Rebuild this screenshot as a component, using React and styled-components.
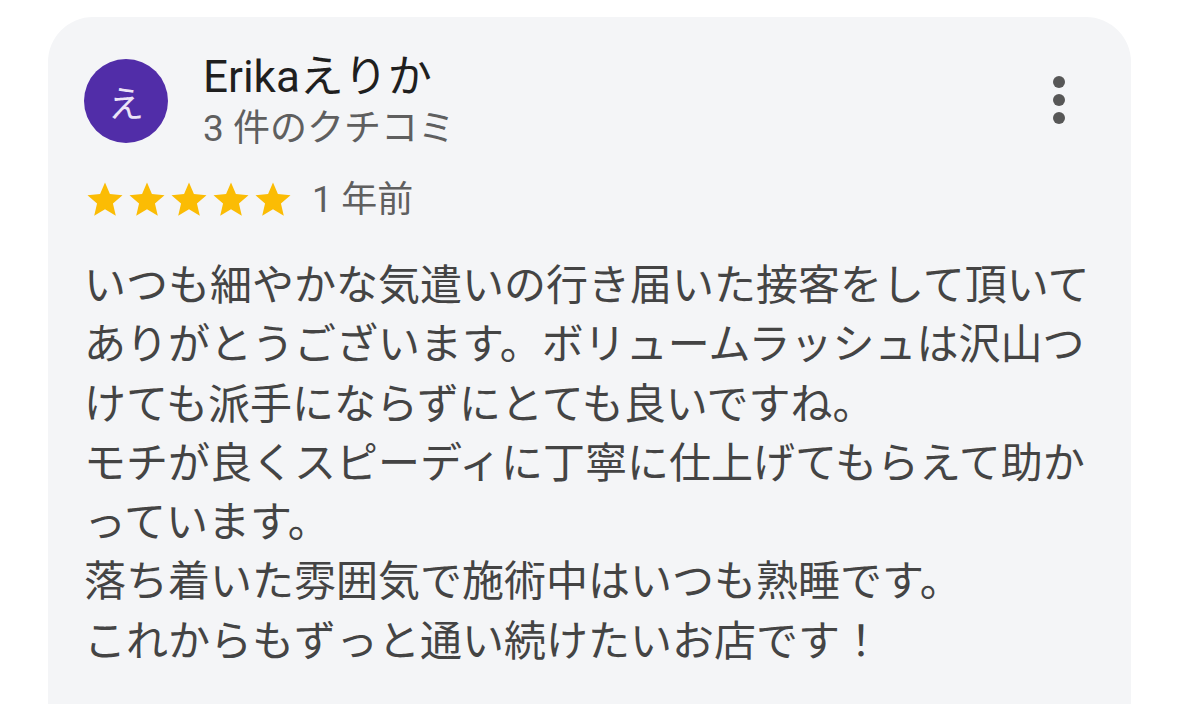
import styled, { createGlobalStyle } from "styled-components";

const GlobalStyle = createGlobalStyle`
  html, body {
    margin: 0;
    padding: 0;
    background: #ffffff;
    overflow: hidden;
  }
  body {
    font-family: "Roboto", "Noto Sans CJK JP", sans-serif;
  }
`;

const review = {
  initial: "え",
  name: "Erikaえりか",
  count: "3 件のクチコミ",
  rating: 5,
  time: "1 年前",
  text:
    "いつも細やかな気遣いの行き届いた接客をして頂いてありがとうございます。ボリュームラッシュは沢山つけても派手にならずにとても良いですね。\n" +
    "モチが良くスピーディに丁寧に仕上げてもらえて助かっています。\n" +
    "落ち着いた雰囲気で施術中はいつも熟睡です。\n" +
    "これからもずっと通い続けたいお店です！",
};

const Star = () => (
  <svg width="42" height="42" viewBox="0 0 24 24">
    <path
      fill="#fbbc04"
      d="M12 17.27L18.18 21l-1.64-7.03L22 9.24l-7.19-.61L12 2 9.19 8.63 2 9.24l5.46 4.73L5.82 21z"
    />
  </svg>
);

const MoreIcon = () => (
  <svg width="72" height="72" viewBox="0 0 24 24" fill="#575757">
    <circle cx="12" cy="6" r="2" />
    <circle cx="12" cy="12" r="2" />
    <circle cx="12" cy="18" r="2" />
  </svg>
);

const App = () => {
  return (
    <>
      <GlobalStyle />
      <Page>
        <Card>
          <Header>
            <Avatar>{review.initial}</Avatar>
            <Author>
              <Name>{review.name}</Name>
              <Count>{review.count}</Count>
            </Author>
            <MenuButton aria-label="その他">
              <MoreIcon />
            </MenuButton>
          </Header>
          <RatingRow>
            <Stars>
              {Array.from({ length: review.rating }).map((_, i) => (
                <Star key={i} />
              ))}
            </Stars>
            <Time>{review.time}</Time>
          </RatingRow>
          <Body>{review.text}</Body>
        </Card>
      </Page>
    </>
  );
};

const Page = styled.div`
  padding: 17px 48px 0 48px;
  height: 704px;
  box-sizing: border-box;
`;

const Card = styled.div`
  background: #f4f5f7;
  border-radius: 45px;
  padding: 42px 36px 80px 36px;
`;

const Header = styled.div`
  display: flex;
  align-items: flex-start;
`;

const Avatar = styled.div`
  width: 84px;
  height: 84px;
  border-radius: 50%;
  background: #512da8;
  color: #ece4f7;
  font-family: "Noto Sans CJK JP", sans-serif;
  font-size: 36px;
  display: flex;
  align-items: center;
  justify-content: center;
  flex-shrink: 0;
`;

const Author = styled.div`
  display: flex;
  flex-direction: column;
  margin-left: 35px;
  margin-top: -4px;
  flex: 1;
`;

const Name = styled.div`
  font-size: 44px;
  line-height: 44px;
  color: #1f1f1f;
`;

const Count = styled.div`
  font-size: 37px;
  line-height: 44px;
  margin-top: 8px;
  color: #5f5f5f;
`;

const MenuButton = styled.button`
  border: none;
  background: none;
  padding: 0;
  margin-top: 5px;
  width: 72px;
  height: 72px;
  display: flex;
`;

const RatingRow = styled.div`
  display: flex;
  align-items: center;
  margin-top: 28px;
`;

const Stars = styled.div`
  display: flex;
  svg {
    display: block;
  }
`;

const Time = styled.span`
  font-size: 36px;
  line-height: 42px;
  color: #5f5f5f;
  margin-left: 18px;
`;

const Body = styled.p`
  margin: 35px 0 0 0;
  font-size: 42px;
  line-height: 59.3px;
  color: #444444;
  white-space: pre-line;
  line-break: anywhere;
`;

export default App;
